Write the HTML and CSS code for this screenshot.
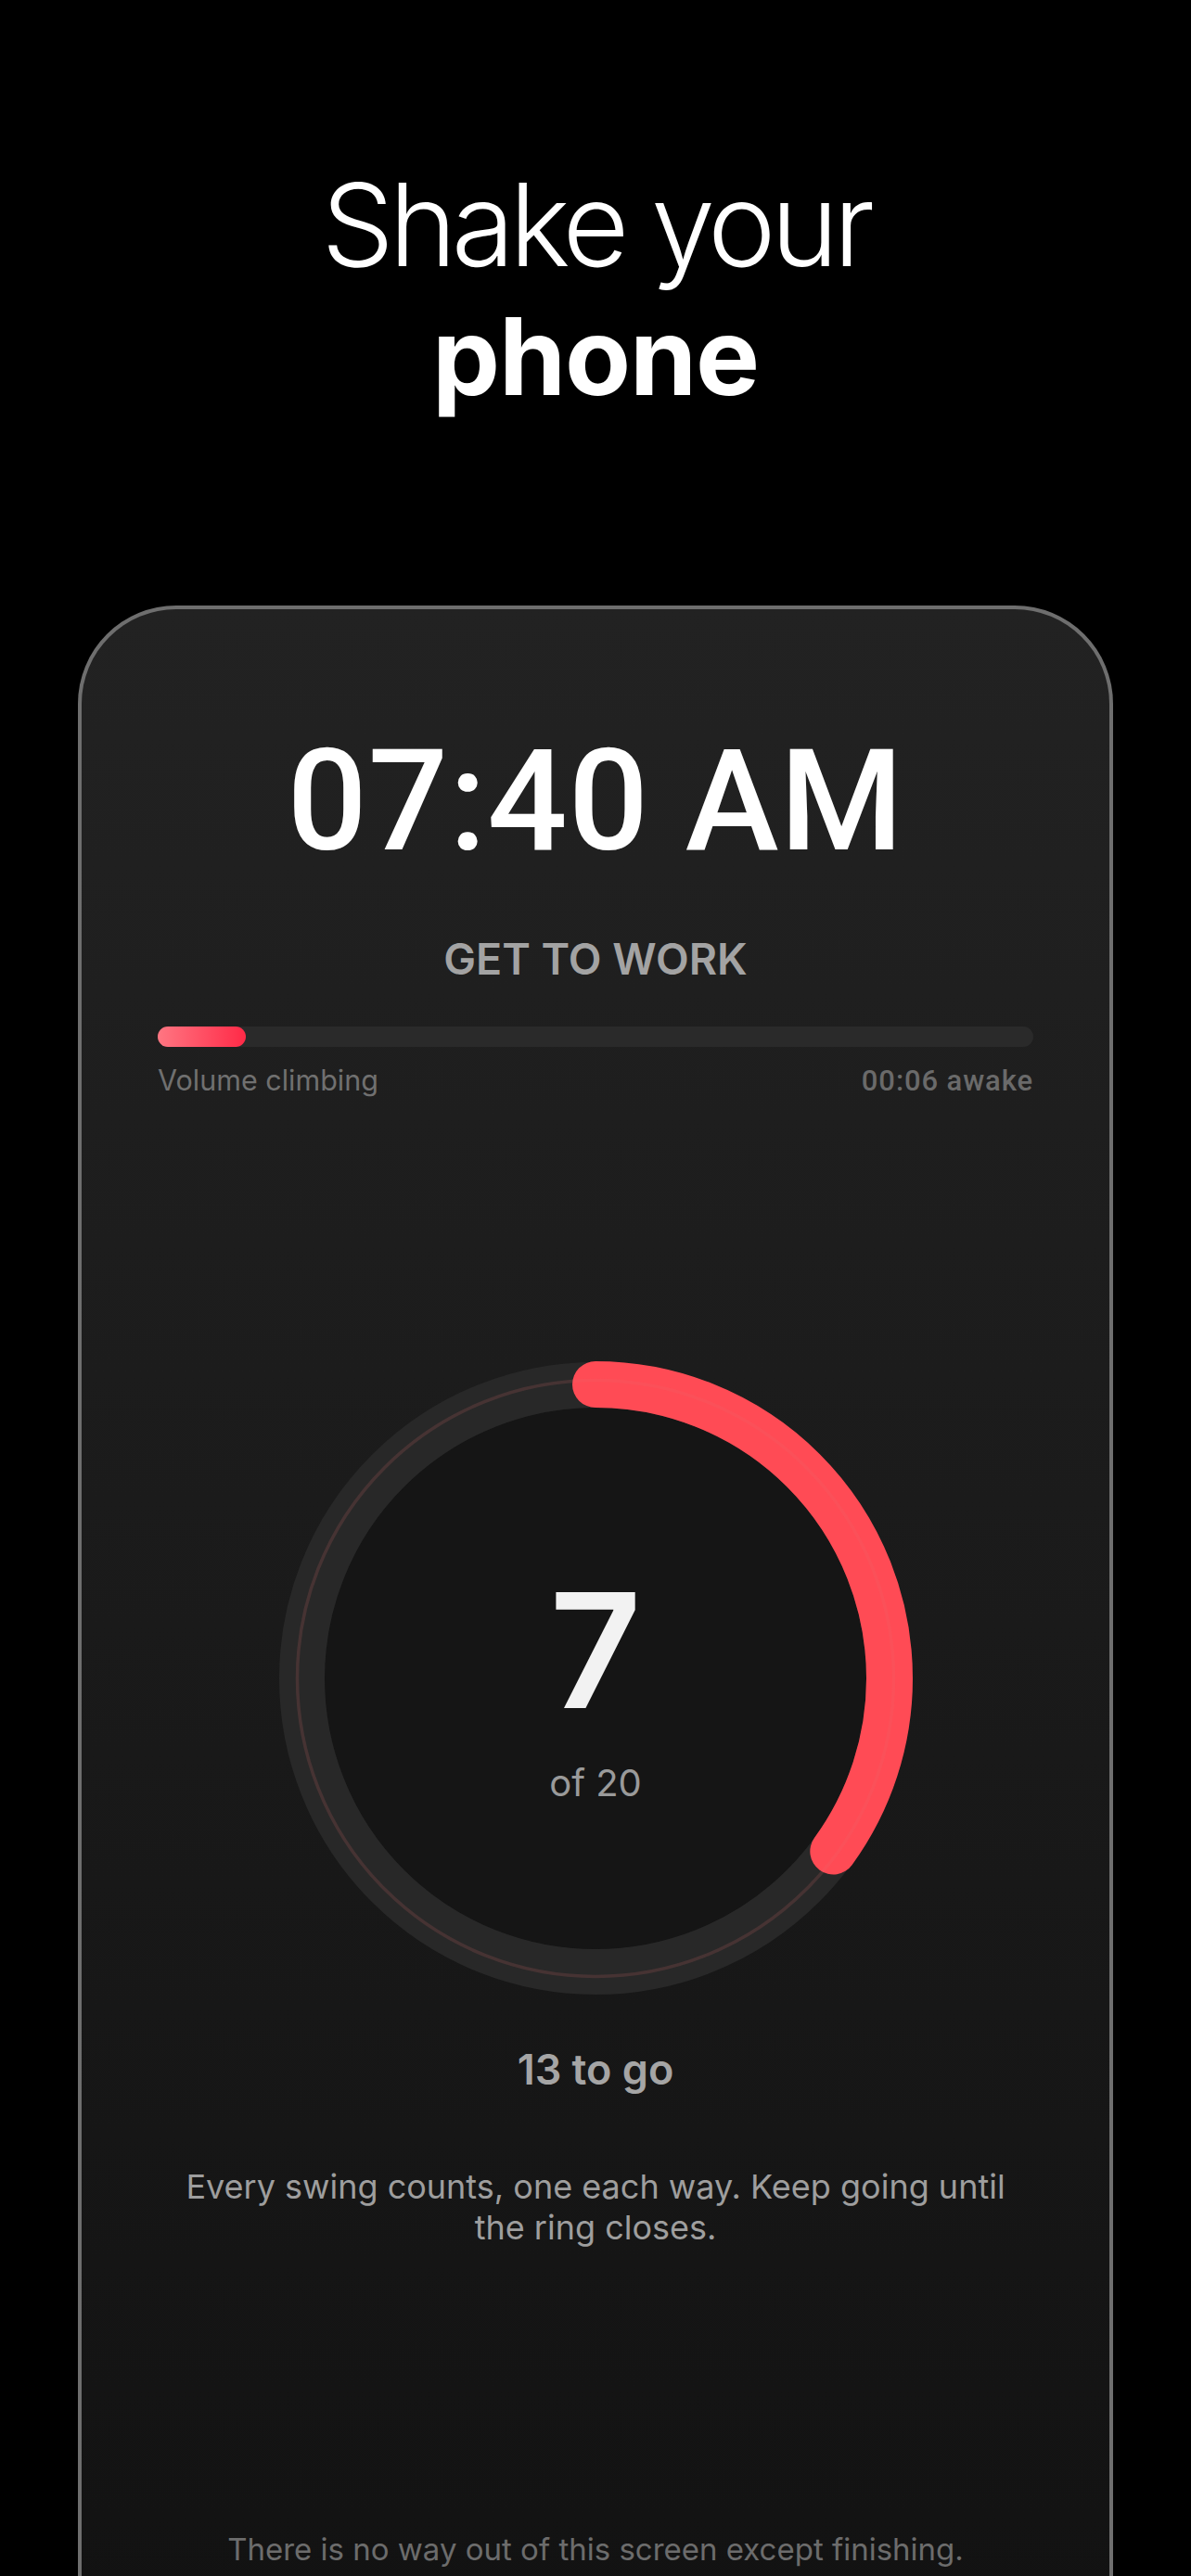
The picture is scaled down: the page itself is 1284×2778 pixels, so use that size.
FILE: index.html
```html
<!DOCTYPE html>
<html lang="en">
<head>
    <meta charset="UTF-8">
    <meta name="viewport" content="width=device-width, initial-scale=1.0">
    <title>Shake your phone</title>
    <link rel="stylesheet" href="styles.css">
</head>
<body>
    <header class="hero">
        <h1 class="hero-title">
            <span class="hero-light">Shake your</span>
            <span class="hero-bold">phone</span>
        </h1>
    </header>

    <main class="phone">
        <div class="clock">07:40 AM</div>
        <div class="alarm-label">GET TO WORK</div>

        <div class="volume">
            <div class="volume-track">
                <div class="volume-fill"></div>
            </div>
            <div class="volume-meta">
                <span class="volume-text">Volume climbing</span>
                <span class="volume-time">00:06 awake</span>
            </div>
        </div>

        <div class="ring">
            <svg class="ring-svg" width="700" height="700" viewBox="0 0 700 700">
                <circle cx="350" cy="350" r="292" fill="#151515"/>
                <circle cx="350" cy="350" r="316.5" fill="none" stroke="#282828" stroke-width="49"/>
                <circle cx="350" cy="350" r="317" fill="none" stroke="#ff4b55" stroke-width="50"
                        stroke-linecap="round" stroke-dasharray="697.1 1991.8"
                        transform="rotate(-90 350 350)"/>
                <circle cx="350" cy="350" r="321.5" fill="none" stroke="rgba(230,110,110,0.16)" stroke-width="3.5"/>
            </svg>
            <div class="ring-center">
                <div class="count">7</div>
                <div class="count-of">of 20</div>
            </div>
        </div>

        <div class="to-go">13 to go</div>
        <p class="hint">Every swing counts, one each way. Keep going until the ring closes.</p>
        <p class="footnote">There is no way out of this screen except finishing.</p>
    </main>
</body>
</html>
```

FILE: styles.css
```css
body {
    margin: 0;
    height: 2778px;
    overflow: hidden;
    background: #000;
    font-family: Inter, "Noto Sans", sans-serif;
    color: #fff;
}
.hero {
    padding-top: 180px;
    text-align: center;
}
.hero-title {
    margin: 0;
    font-weight: normal;
}
.hero-light {
    display: block;
    font-size: 124px;
    line-height: 124px;
    font-weight: 300;
    letter-spacing: -0.045em;
}
.hero-bold {
    display: block;
    margin-top: 22px;
    font-size: 116px;
    line-height: 116px;
    font-weight: 700;
    letter-spacing: -0.01em;
}
.phone {
    margin: 211px 84px 0;
    padding: 131px 82px 0;
    min-height: 2200px;
    border: 4px solid #6e6e6e;
    border-bottom: none;
    border-radius: 106px 106px 0 0;
    background: linear-gradient(#222222, #111111);
    display: flex;
    flex-direction: column;
    align-items: center;
}
.clock {
    font-family: Roboto, sans-serif;
    font-size: 152px;
    line-height: 1;
    font-weight: 500;
    letter-spacing: 1px;
    color: #fff;
}
.alarm-label {
    margin-top: 71px;
    font-size: 46.5px;
    line-height: 1;
    font-weight: 600;
    color: #a3a3a3;
}
.volume {
    width: 100%;
    margin-top: 49px;
}
.volume-track {
    height: 22px;
    border-radius: 11px;
    background: #2a2a2a;
}
.volume-fill {
    width: 95px;
    height: 22px;
    border-radius: 11px;
    background: linear-gradient(90deg, #ff7682, #ff2a47);
}
.volume-meta {
    display: flex;
    justify-content: space-between;
    align-items: baseline;
    margin-top: 21px;
}
.volume-text {
    font-size: 30.5px;
    line-height: 1;
    color: #707070;
}
.volume-time {
    font-family: Roboto, sans-serif;
    font-size: 31px;
    line-height: 1;
    font-weight: 500;
    letter-spacing: 0.9px;
    color: #6a6a6a;
}
.ring {
    margin-top: 279px;
    width: 700px;
    height: 700px;
    display: grid;
}
.ring-svg,
.ring-center {
    grid-area: 1 / 1;
}
.ring-center {
    align-self: center;
    justify-self: center;
    padding-top: 16px;
    display: flex;
    flex-direction: column;
    align-items: center;
}
.count {
    font-size: 172px;
    line-height: 1;
    font-weight: 600;
    color: #f2f2f2;
}
.count-of {
    margin-top: 38px;
    font-size: 40px;
    line-height: 1;
    color: #9a9a9a;
}
.to-go {
    margin-top: 49px;
    font-size: 45px;
    line-height: 1;
    font-weight: 600;
    color: #a5a5a5;
}
.hint {
    margin: 82px 0 0;
    max-width: 905px;
    font-size: 36px;
    line-height: 44px;
    text-align: center;
    color: #9e9e9e;
}
.footnote {
    margin: 309px 0 0;
    font-size: 33px;
    line-height: 1;
    color: #6c6c6c;
}
```
